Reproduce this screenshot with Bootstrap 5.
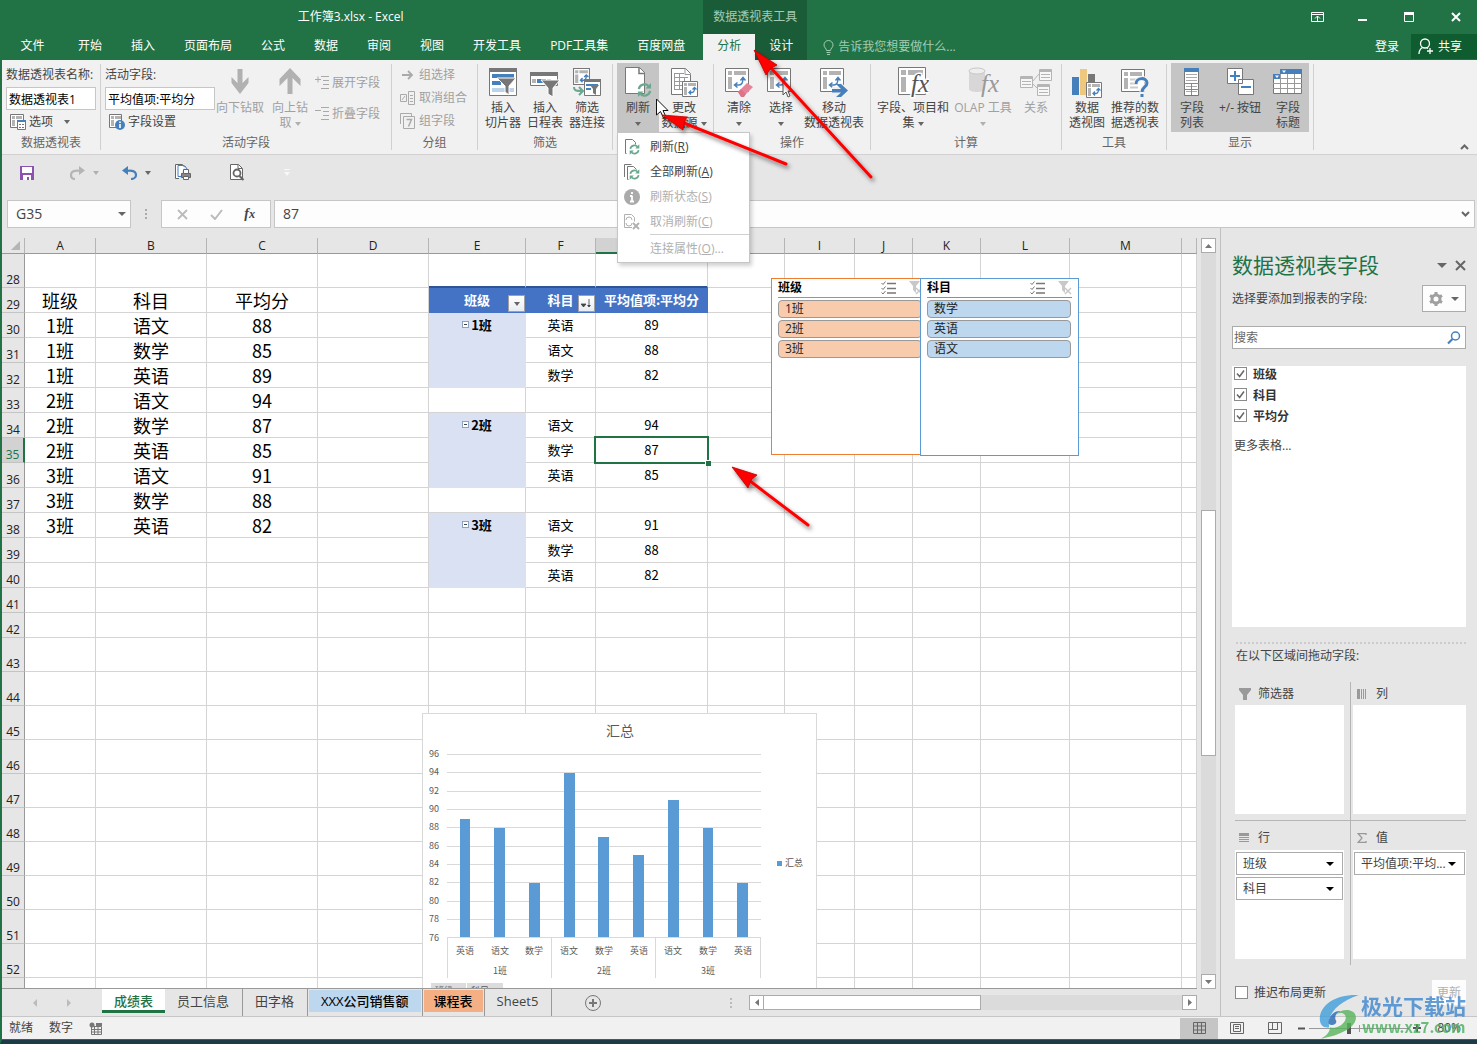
<!DOCTYPE html>
<html lang="zh-CN">
<head>
<meta charset="utf-8">
<meta name="viewport" content="width=device-width, initial-scale=1">
<title>工作簿3.xlsx - Excel</title>
<link href="https://cdn.jsdelivr.net/npm/bootstrap@5.3.0/dist/css/bootstrap.min.css" rel="stylesheet">
<style>
:root{--xl-green:#217346;--xl-dark:#1b5c38;--xl-bg:#e6e6e6;--xl-line:#d4d4d4;--xl-blue:#4680bc}
body{font-family:"Open Sans","Noto Sans CJK SC",sans-serif;font-size:12px;line-height:16px;color:#444;background:var(--xl-bg);overflow:hidden}
svg{display:block;flex:none}
button,input{font-family:inherit;font-size:12px;line-height:16px;color:inherit}
button{background:none;border:0;padding:0}
a{color:inherit;text-decoration:none}
.app-window{border-left:2px solid var(--xl-green);border-bottom:4px solid #1d3a47}
.caret-s{width:0;height:0;border:3px solid transparent;border-top:4px solid #666;border-bottom:0;display:inline-block;vertical-align:middle}
/* title bar and tabs */
.app-head{background:var(--xl-green);color:#fff}
.head-top{height:34px}
.head-tabs{height:26px}
.head-tabs .nav-link{color:#fff;padding:4px 14px 0;font-size:12px;line-height:16px;border-radius:0}
.head-tabs .file-tab{width:61px;text-align:center}
.ctx{background:var(--xl-dark);width:104px}
.ctx .nav-link.active{background:#f1f1f1;color:var(--xl-green)}
.ctx-title,.tell-me{color:#a3cbb3}
.share-btn{background:#0e5c2f;color:#fff;width:66px;height:25px}
/* ribbon */
.ribbon{background:#f1f1f1;border-bottom:1px solid #d2d0d0;height:95px;padding-top:3px}
.rgroup{padding:0 5px 0 4px;position:relative;height:88px}
.rgroup::after{content:"";position:absolute;right:0;top:1px;bottom:1px;width:1px;background:#d0d0d0}
.rgroup .gbody{height:69px}
.gname{text-align:center;color:#666;padding-top:3px;white-space:nowrap}
.rbtn{display:flex;flex-direction:column;align-items:center;height:69px;padding-top:4px;line-height:15px;white-space:nowrap;color:#444}
.rbtn svg{height:32px;margin-bottom:1px}
.w-a{width:42px}.w-b{width:50px}.w-c{width:54px}.w-d{width:64px}.w-e{width:76px}
.held{background:#c5c5c5}
.off,.rbtn.off{color:#a0a0a0}
.off .caret-s{border-top-color:#b0b0b0}
.rfield{height:23px;border:1px solid #c6c6c6;background:#fff;color:#000;padding:0 2px;width:100%;display:block}
.rrow{display:flex;align-items:center;gap:3px;height:23px;white-space:nowrap}
.menu-list{min-width:133px;width:133px;border:1px solid #c6c6c6;border-radius:0;padding:1px 0;box-shadow:2px 3px 4px rgba(0,0,0,.18);font-size:12px;top:69px;left:0;z-index:30}
.menu-list .dropdown-item{padding:0 0 0 6px;height:25px;line-height:16px;display:flex;align-items:center;gap:10px;color:#444}
.menu-list .dropdown-item.disabled{color:#b0b0b0}
.menu-list .dropdown-divider{margin:0 0 1px 32px;border-color:#d0d0d0}
/* quick access and formula bar */
.qat{height:45px;padding:0 0 10px 18px}
.fbar{height:28px;padding:0 2px 0 5px}
.fbox{border:1px solid #c6c6c6;background:#fdfdfd;height:28px;display:flex;align-items:center}
.fbox input{border:0;background:none;font-size:14px;min-width:0;color:#444}
/* sheet */
.sheet{position:relative;overflow:hidden;border-bottom:1px solid #999}
.cells{table-layout:fixed;width:100%;border-collapse:separate;border-spacing:0;font-family:"Noto Sans CJK SC",sans-serif;background:#fff;color:#000}
.cells th,.cells td{padding:0;overflow:visible;text-align:center;white-space:nowrap;border-right:1px solid var(--xl-line);border-bottom:1px solid var(--xl-line);line-height:22px;height:25px}
.cells th{font-weight:400;background:var(--xl-bg);font-size:12px;font-family:"Open Sans",sans-serif;color:#222}
.cells thead th{height:16px;line-height:14px;border-right-color:#b5b5b5;border-bottom-color:#999}
.cells tbody th{vertical-align:bottom;line-height:14px;border-right-color:#999;border-bottom-color:#c4c4c4}
.cells .tall td,.cells .tall th{height:34px}
.cells td{font-size:13px}
.cells .src{font-size:18px}
.cells .ph{background:#4472c4;border-color:#4472c4;color:#fff;font-weight:700;position:relative}
.cells .pt{border-bottom:2px solid #2f5597}
.cells .pg{background:#d9e1f2;border-color:#d9e1f2;font-weight:700}
.cells .th-on{background:#d2d2d2;color:var(--xl-green);border-bottom:2px solid var(--xl-green)}
.cells .tr-on{background:#d2d2d2;color:var(--xl-green);border-right:2px solid var(--xl-green)}
.toggle{display:inline-block;width:7px;height:7px;border:1px solid #8ea2c0;background:#fff;margin-right:2px;vertical-align:2px;position:relative}
.toggle::after{content:"";position:absolute;left:1px;right:1px;top:2px;height:1px;background:#345}
.flt{position:absolute;right:0;bottom:0;width:17px;height:17px;border:1px solid #a0a0a0;background:linear-gradient(#fff,#e8ecf2);display:flex;align-items:center;justify-content:center}
.cell-on{position:relative}
.pick{position:absolute;inset:-2px;border:2px solid var(--xl-green)}
.pick::after{content:"";position:absolute;right:-4px;bottom:-4px;width:6px;height:6px;background:var(--xl-green);border:1px solid #fff;border-right:0;border-bottom:0}
.slicer{position:absolute;width:159px;background:#fff;border:1px solid;padding:0 6px;color:#000;top:40px}
.slicer.slicer-a{left:769px;height:177px;border-color:#ed7d31}
.slicer.slicer-b{left:918px;height:178px;border-color:#5b9bd5}
.slicer-top{height:19px;border-bottom:1px solid;border-color:inherit;font-weight:700;margin-bottom:2px}
.slicer button{display:block;width:144px;height:18px;border:1px solid #999;border-radius:4px;text-align:left;padding-left:6px;margin-bottom:2px;line-height:14px;color:#222}
.slicer-a button{background:#f8cbad}.slicer-b button{background:#bdd7ee}
.chart-box{position:absolute;left:420px;top:475px;background:#fff;border:1px solid #d9d9d9;width:395px;height:290px}
.chart-box text{font-family:"Noto Sans CJK SC",sans-serif;fill:#595959;text-anchor:middle;font-size:9px}
/* scroll bars */
.vbar{width:15px;background:#dbdbdb}
.sbtn{width:15px;height:15px;background:#fff;border:1px solid #ababab;display:flex;align-items:center;justify-content:center;flex:none}
.sthumb{background:#fff;border:1px solid #ababab}
.vbar .sthumb{height:246px;margin-top:257px}
.hbar{width:448px;height:15px;background:#dbdbdb}
.hbar .sthumb{width:218px;margin-left:-1px}
/* sheet tabs */
.tabbar{height:27px}
.tabbar .nav-link{font-size:13px;line-height:18px;color:#444;border-radius:0;height:24px;padding:3px 12px;white-space:nowrap}
.tabbar .nav-item{border-right:1px solid #999;padding-right:1px}
.tabbar .nav-item:first-child{border-right:0;padding:0}
.tabbar .nav-link.active{background:#fff;color:var(--xl-green);border-bottom:3px solid var(--xl-green);font-weight:500}
.tabbar .t-blue{background:#bdd7ee;color:#000;margin:1px 0 0 1px;height:22px;line-height:16px;font-weight:500}
.tabbar .t-orange{background:#f4b084;color:#000;padding:3px 10px;margin:1px 0 0 1px;height:22px;line-height:16px;font-weight:500}
/* fields pane */
.pane{width:257px;border-left:1px solid #c0c0c0;padding:17px 11px 0;background:var(--xl-bg)}
.pane h2{font-size:21px;line-height:24px;color:var(--xl-green);margin:0;font-weight:400}
.gear-btn{width:44px;height:27px;border:1px solid #ababab;background:#fdfdfd;gap:8px}
.find{border:1px solid #ababab;background:#fff;height:23px}
.find input{border:0;background:none;padding:0 1px;min-width:0}
.find input::placeholder{color:#666}
.flist{background:#fff;height:261px;padding:1px 2px}
.fcheck{display:flex;align-items:center;gap:6px;height:21px;min-height:0;margin:0;padding:0}
.fcheck .form-check-input{width:13px;height:13px;margin:0;float:none;border:1px solid #8a8a8a;border-radius:0;background-color:#fff}
.fcheck .form-check-input:checked{background-image:url("data:image/svg+xml,%3Csvg xmlns='http://www.w3.org/2000/svg' viewBox='0 0 11 11'%3E%3Cpath d='M2 5.5l2.6 3L9 2.5' fill='none' stroke='%23666' stroke-width='1.5'/%3E%3C/svg%3E");background-color:#fff;border-color:#8a8a8a}
.flist .fcheck{align-items:flex-start}
.flist label{font-weight:700;color:#333}
.areas{display:grid;grid-template-columns:116px 1fr}
.zone{padding:0 0 6px 2px}
.zone:nth-child(odd){padding:0 6px 6px 0;border-right:1px solid #b5b5b5}
.zone:nth-child(-n+2){border-bottom:1px solid #b5b5b5}
.zhead{height:23px;gap:7px;padding-left:4px}
.zone:nth-child(n+3) .zhead{height:29px;padding-top:4px}
.zbox{height:109px;background:#fff;padding:2px 1px}
.zitem{width:100%;height:23px;border:1px solid #ababab;background:#fff;padding:0 8px 0 6px;display:flex;align-items:center;justify-content:space-between;margin-bottom:2px;white-space:nowrap}
.zitem .caret-s{border-width:4px 4px 0;border-top-color:#000}
.upd{width:34px;height:25px;background:#fdfdfd;color:#b0b0b0}
/* status bar */
.status{height:23px;background:#f1f1f1;border-top:1px solid #c6c6c6;padding-left:7px}
.vbtn{width:38px;height:21px;display:flex;align-items:center;justify-content:center}
.zoom-range{appearance:none;width:100px;height:15px;margin:0;background:linear-gradient(#999,#999) center/100% 1px no-repeat,linear-gradient(#999,#999) center/1px 7px no-repeat}
.zoom-range::-webkit-slider-thumb{appearance:none;width:4px;height:11px;background:#555}
.zoom-range::-moz-range-thumb{width:4px;height:11px;background:#555;border:0;border-radius:0}
.notes{position:absolute;left:638px;top:40px;pointer-events:none;z-index:40}
.brand{position:absolute;right:8px;bottom:0;z-index:40;pointer-events:none;width:156px;height:50px;opacity:.8}
.brand text{font-family:"Noto Sans CJK SC",sans-serif;font-weight:700}
</style>
<script src="https://cdn.jsdelivr.net/npm/bootstrap@5.3.0/dist/js/bootstrap.bundle.min.js"></script>
</head>
<body>
<svg width="0" height="0" class="position-absolute" aria-hidden="true">
  <symbol id="pv" viewBox="0 0 24 24"><path d="M.5.5h23v23H.5z" fill="#fff" stroke="#777"/><path d="M3 3h4v4H3zM9 3h12v4H9zM3 9h4v12H3z" fill="#b3b3b3"/><path d="M10 17h4c3 0 4-2 4-7M15.500 12.500 18 9.500l2.500 3M12.500 14.500 9.500 17l3 2.500" fill="none" stroke="#4680bc" stroke-width="1.500"/></symbol>
  <symbol id="pvs" viewBox="0 0 16 16"><path d="M.5.5h15v15H.5z" fill="#fff" stroke="#777"/><path d="M2 2h3v3H2zM6 2h8v3H6zM2 6h3v8H2z" fill="#b3b3b3"/><path d="M7 11.500h3c2 0 2.500-2 2.500-4.500M10.500 8.500l2-2 2 2M9 9.500l-2 2 2 2" fill="none" stroke="#4680bc" stroke-width="1.300"/></symbol>
  <symbol id="cyc" viewBox="0 0 16 16"><path d="M2 7a6 5.500 0 0 1 10.500-3M14 9a6 5.500 0 0 1-10.500 3" fill="none" stroke="#6aa88f" stroke-width="2.400"/><path d="M15 .5v6H9zM1 15.500v-6h6z" fill="#6aa88f"/></symbol>
  <symbol id="chk" viewBox="0 0 16 14"><path d="M6 2.500h9M6 7.500h9M6 12h9" stroke="#777" stroke-width="1.300"/><path d="M.5 2 2 3.500 4.500.5M.5 7 2 8.500 4.500 5.500M.5 11.500 2 13l2.500-3" fill="none" stroke="#777"/></symbol>
  <symbol id="nofl" viewBox="0 0 14 14"><path d="M0 0h11L7 5v7L4 9V5z" fill="#c8c8c8"/><path d="m7 7 6 6m0-6-6 6" stroke="#c8c8c8" stroke-width="1.500"/></symbol>
</svg>

<div class="app-window d-flex flex-column vh-100 position-relative">
  <header class="app-head d-flex flex-shrink-0">
    <div class="pe-1">
      <div class="head-top d-flex align-items-center justify-content-center">工作簿3.xlsx - Excel</div>
      <nav class="head-tabs nav flex-nowrap text-nowrap" style="gap:1px">
        <a class="nav-link file-tab" href="#">文件</a><a class="nav-link" href="#">开始</a><a class="nav-link" href="#">插入</a><a class="nav-link" href="#">页面布局</a><a class="nav-link" href="#">公式</a><a class="nav-link" href="#">数据</a><a class="nav-link" href="#">审阅</a><a class="nav-link" href="#">视图</a><a class="nav-link" href="#">开发工具</a><a class="nav-link" href="#">PDF工具集</a><a class="nav-link" href="#">百度网盘</a>
      </nav>
    </div>
    <div class="ctx">
      <div class="head-top ctx-title d-flex align-items-center justify-content-center">数据透视表工具</div>
      <nav class="head-tabs nav nav-fill flex-nowrap"><a class="nav-link active" href="#">分析</a><a class="nav-link" href="#">设计</a></nav>
    </div>
    <div class="flex-grow-1">
      <div class="head-top d-flex align-items-center justify-content-end pe-3" style="gap:33px">
        <button aria-label="功能区显示选项"><svg width="13" height="10" fill="none" stroke="#fff"><path d="M.5.5h12v9H.5zM0 2.500h13M6.500 9V4M4 6.500 6.500 4 9 6.500"/></svg></button>
        <button aria-label="最小化"><svg width="10" height="10"><path d="M1 7h9v2H1z" fill="#fff"/></svg></button>
        <button class="ms-1" aria-label="最大化"><svg width="10" height="10"><path d="M.5.500h9v9h-9z" fill="none" stroke="#fff"/><path d="M0 0h10v3H0z" fill="#fff"/></svg></button>
        <button class="ms-1" aria-label="关闭"><svg width="10" height="10"><path d="m1 1 8 8m0-8L1 9" stroke="#fff" stroke-width="2"/></svg></button>
      </div>
      <div class="head-tabs d-flex">
        <div class="tell-me d-flex align-items-center gap-1 ps-3"><svg width="11" height="15" fill="none" stroke="#a3cbb3"><path d="M3.500 10.500c0-2-2.500-3-2.500-5.500a4.500 4.500 0 0 1 9 0c0 2.500-2.500 3.500-2.500 5.500zM3.500 12.500h4M4 14.500h3"/></svg>告诉我您想要做什么...</div>
        <button class="ms-auto me-2 px-1 text-white">登录</button>
        <button class="share-btn d-flex align-items-center justify-content-center gap-1 pe-2"><svg width="16" height="17" fill="none" stroke="#fff" stroke-width="1.300"><circle cx="7" cy="5.500" r="4.500"/><path d="M1 16c0-3 1-5 3.500-6.500M9 10l1 .5M12 10v6M9 13h6"/></svg>共享</button>
      </div>
    </div>
  </header>

  <section class="ribbon d-flex flex-shrink-0">
    <div class="rgroup" style="width:99px">
      <div class="gbody">
        <label for="pvname" class="d-block text-nowrap pt-1 pb-1">数据透视表名称:</label>
        <input id="pvname" class="rfield" value="数据透视表1">
        <button class="rrow ps-1"><svg width="16" height="16"><path d="M.5.500h13v13H.5z" fill="#fff" stroke="#777"/><path d="M2 2h3v3H2zM6 2h6v3H6zM2 6h3v6H2z" fill="#b3b3b3"/><path d="M7.500 6.500h8v9h-8z" fill="#fff" stroke="#777"/><path d="M7 6h9v2H7z" fill="#4680bc"/><path d="M9 10.500h2m1 0h2m-5 3h2m1 0h2" stroke="#777"/></svg>选项<span class="caret-s ms-2"></span></button>
      </div>
      <div class="gname">数据透视表</div>
    </div>
    <div class="rgroup" style="width:291px">
      <div class="gbody d-flex">
        <div style="width:110px">
          <label for="actf" class="d-block pt-1 pb-1">活动字段:</label>
          <input id="actf" class="rfield" value="平均值项:平均分">
          <button class="rrow ps-1"><svg width="16" height="16"><path d="M.5.500h12v13H.5z" fill="#fff" stroke="#777"/><path d="M2 2h3v3H2zM6 2h6v3H6zM2 6h3v6H2z" fill="#b3b3b3"/><circle cx="11" cy="11" r="5" fill="#4680bc"/><path d="M11 7.500v1.500M11 10v4" stroke="#fff" stroke-width="1.600"/></svg>字段设置</button>
        </div>
        <button class="rbtn off w-b"><svg width="24" height="32"><path d="M9.500 2h5v14l6-6v6L12 27 3.500 16v-6l6 6z" fill="#b1b1b1"/></svg>向下钻取</button>
        <button class="rbtn off w-b"><svg width="24" height="32"><path d="M9.500 27h5V11l8 8v-7L12 1 1.500 12v7l8-8z" fill="#b1b1b1"/></svg>向上钻<span>取 <span class="caret-s"></span></span></button>
        <div class="off">
          <button class="rrow mt-2"><svg width="14" height="14" stroke="#a9a9a9"><path d="M0 3.500h6M3 .5v6M6 .5h8M8 4.500h6M8 8.500h6M6 12.500h8"/></svg>展开字段</button>
          <button class="rrow mt-2"><svg width="14" height="14" stroke="#a9a9a9"><path d="M0 3.500h6M6 .5h8M8 4.500h6M8 8.500h6M6 12.500h8"/></svg>折叠字段</button>
        </div>
      </div>
      <div class="gname">活动字段</div>
    </div>
    <div class="rgroup" style="width:86px">
      <div class="gbody off ps-1">
        <button class="rrow"><svg width="16" height="14" fill="none" stroke="#aaa" stroke-width="1.800"><path d="M2 7h10M8 3l4 4-4 4"/></svg>组选择</button>
        <button class="rrow"><svg width="16" height="14" fill="none" stroke="#aaa"><path d="M.5 3.500h6v7h-6zM2 9l3-4M8.500.500h6v13h-6zM10 4.500h3m-3 3h3m-3 3h3"/></svg>取消组合</button>
        <button class="rrow"><svg width="16" height="16" fill="none" stroke="#aaa"><path d="M.5 11V.500h11v3M3.500 3.500h11v12h-11z"/><path d="M6.500 6.500h5l-3 7" stroke-width="1.500"/></svg>组字段</button>
      </div>
      <div class="gname">分组</div>
    </div>
    <div class="rgroup">
      <div class="gbody d-flex">
        <button class="rbtn w-a"><svg width="28" height="32"><path d="M.5 1.500h27v27H.5z" fill="#fff" stroke="#777"/><path d="M0 1h28v4H0z" fill="#777"/><path d="M3 7h22v4H3zM3 14h9v4H3z" fill="#4680bc"/><path d="M3 21h22v4H3z" fill="#bdd3ea"/><path d="M8 11h19l-7 8v9l-4-3v-6z" fill="#777" stroke="#fff"/></svg>插入<span>切片器</span></button>
        <button class="rbtn w-a"><svg width="30" height="32"><path d="M.5 5.500h27v13H.5z" fill="#fff" stroke="#777"/><path d="M0 5h28v4H0z" fill="#777"/><path d="M2 12h4v4H2zM17 12h4v4h-4z" fill="#b3b3b3"/><path d="M7 12h9v4H7z" fill="#4680bc"/><path d="M11 13h19l-7 8v9l-5-3v-6z" fill="#777" stroke="#fff"/></svg>插入<span>日程表</span></button>
        <button class="rbtn w-a"><svg width="28" height="32"><use href="#pvs" x="0" y="1" width="17" height="17"/><path d="M11.500 12.500h16v16h-16z" fill="#fff" stroke="#777"/><path d="M11 12h17v3H11z" fill="#777"/><path d="M13 17h12v2H13zM13 21h5v2h-5z" fill="#4680bc"/><path d="M17 18h9l-3 4v6l-3-2v-4z" fill="#777"/><path d="M1 20c0 4 3 4 8 4M6 20l4 4-4 4" fill="none" stroke="#6aa88f" stroke-width="2"/></svg>筛选<span>器连接</span></button>
      </div>
      <div class="gname">筛选</div>
    </div>
    <div class="rgroup">
      <div class="gbody d-flex">
        <div class="dropdown">
          <button class="rbtn held w-a" aria-expanded="true"><svg width="28" height="32"><path d="M1.500.500h14l5 5v21h-19z" fill="#fff" stroke="#777"/><path d="M15 .5v6h6" fill="none" stroke="#777" stroke-width="1.500"/><use href="#cyc" x="13" y="15" width="15" height="16"/></svg>刷新<span><span class="caret-s"></span></span></button>
          <div class="dropdown-menu menu-list show">
            <a class="dropdown-item" href="#"><svg width="16" height="16"><path d="M2.500 14.500h-1V.5h7l3 3v2" fill="#fff" stroke="#777"/><use href="#cyc" x="5" y="5" width="11" height="11"/></svg><span>刷新(<u>R</u>)</span></a>
            <a class="dropdown-item" href="#"><svg width="16" height="16"><path d="M.5 13V.5h7M4.500 15.500h-1v-13h6l3 3" fill="none" stroke="#777"/><use href="#cyc" x="5" y="5" width="11" height="11"/></svg><span>全部刷新(<u>A</u>)</span></a>
            <a class="dropdown-item disabled" href="#"><svg width="16" height="16"><circle cx="8" cy="8" r="8" fill="#aaa"/><path d="M8 3v2M8 6.500V13M6 7h2M6 12.500h4" stroke="#fff" stroke-width="1.800"/></svg><span>刷新状态(<u>S</u>)</span></a>
            <a class="dropdown-item disabled" href="#"><svg width="16" height="16" fill="none" stroke="#b0b0b0"><path d="M8 13.500H.5V.5h7l3 3v4M2 6a3 3 0 0 1 6 0M2 9a3 3 0 0 0 6 0"/><path d="m9 9 6 6m0-6-6 6" stroke-width="1.800"/></svg><span>取消刷新(<u>C</u>)</span></a>
            <hr class="dropdown-divider">
            <a class="dropdown-item disabled" href="#"><svg width="16" height="16"></svg><span>连接属性(<u>O</u>)...</span></a>
          </div>
        </div>
        <button class="rbtn w-b"><svg width="28" height="32"><path d="M1.500 1.500h14l5 5v21h-19z" fill="#fff" stroke="#777"/><path d="M15 1.500v6h6M4 6.500h10M4 10.500h14M4 14.500h14M4 18.500h14M4 22.500h14M4.500 6v17M9.500 6v17M14.500 10v13" fill="none" stroke="#999"/><use href="#pvs" x="12" y="14" width="16" height="16"/></svg>更改<span>数据源 <span class="caret-s"></span></span></button>
      </div>
      <div class="gname">数据</div>
    </div>
    <div class="rgroup">
      <div class="gbody d-flex">
        <button class="rbtn w-a"><svg width="28" height="32"><use href="#pv" y="1" width="24" height="24"/><path d="m13 25 9-9 6 4-9 9h-3z" fill="#e6849a"/><path d="m13 25 3-3 5 5-2 3h-3z" fill="#dd7389"/></svg>清除<span><span class="caret-s"></span></span></button>
        <button class="rbtn w-a"><svg width="28" height="32"><use href="#pv" y="1" width="24" height="24"/><path d="M16 15v13l3-3 2 5 2-1-2-5h4z" fill="#fff" stroke="#555"/></svg>选择<span><span class="caret-s"></span></span></button>
        <button class="rbtn w-d"><svg width="28" height="32"><use href="#pv" y="1" width="24" height="24"/><path d="M12 22.500h8M19 17l7 6.500-7 6.500" fill="none" stroke="#f1f1f1" stroke-width="5"/><path d="M12 22h9l-5-5h5l7 6.500-7 6.500h-5l5-4.500h-9z" fill="#4680bc"/></svg>移动<span>数据透视表</span></button>
      </div>
      <div class="gname">操作</div>
    </div>
    <div class="rgroup">
      <div class="gbody d-flex">
        <button class="rbtn w-e"><svg width="32" height="32"><path d="M1.500.500h27v27h-27z" fill="#fff" stroke="#777"/><path d="M4 3h5v5H4zM11 3h15v5H11zM4 10h5v15H4z" fill="#b3b3b3"/><text x="14" y="25" font-family="Liberation Serif,serif" font-style="italic" font-size="25" fill="#555" stroke="#fff" stroke-width="3" paint-order="stroke">fx</text></svg>字段、项目和<span>集 <span class="caret-s"></span></span></button>
        <button class="rbtn off w-d"><svg width="32" height="32"><path d="M2 4v18c0 4 16 4 16 0V4z" fill="#d9d6d8"/><ellipse cx="10" cy="4" rx="8" ry="3" fill="#eee" stroke="#c8c8c8"/><text x="14" y="25" font-family="Liberation Serif,serif" font-style="italic" font-size="25" fill="#999">fx</text></svg>OLAP 工具<span><span class="caret-s"></span></span></button>
        <button class="rbtn off w-a"><svg width="32" height="32" fill="#f7f7f7" stroke="#b5b5b5"><path d="m12 15 7-8m-7 9 6 6"/><path d="M.5 9.500h12v11H.5zM19.500 2.500h12v11h-12zM17.500 17.500h12v11h-12zM2 14.500h9m-9 3h9M21 7.500h9m-9 3h9M19 22.500h9m-9 3h9"/><path d="M0 10h13v2H0zM19 3h13v2H19zM17 18h13v2H17z" fill="#b5b5b5" stroke="none"/></svg>关系</button>
      </div>
      <div class="gname">计算</div>
    </div>
    <div class="rgroup">
      <div class="gbody d-flex">
        <button class="rbtn w-a"><svg width="32" height="32"><path d="M1 10h7v18H1z" fill="#4680bc"/><path d="M9 2h7v26H9z" fill="#edc87e"/><path d="M17 7h7v10h-7z" fill="#777"/><use href="#pvs" x="15" y="15" width="16" height="16"/></svg>数据<span>透视图</span></button>
        <button class="rbtn w-c"><svg width="30" height="32"><path d="M1.500 2.500h23v22h-23z" fill="#fff" stroke="#777"/><path d="M4 5h4v4H4zM10 5h12v4H10zM4 11h4v11H4z" fill="#b3b3b3"/><path d="M10 12.500h8m-8 4h8m-8 4h8" stroke="#ccc" stroke-width="2"/><path d="M16 17c0-7 11-7 11-1 0 4-5 4-5 9M22 27v3" fill="none" stroke="#f1f1f1" stroke-width="5"/><path d="M16 17c0-7 11-7 11-1 0 4-5 4-5 9M22 27v3" fill="none" stroke="#4680bc" stroke-width="3"/></svg>推荐的数<span>据透视表</span></button>
      </div>
      <div class="gname">工具</div>
    </div>
    <div class="rgroup">
      <div class="gbody d-flex held">
        <button class="rbtn w-a"><svg width="16" height="32"><path d="M.5 1.500h14v27H.5z" fill="#fff" stroke="#777"/><path d="M0 1h15v4H0z" fill="#4680bc"/><path d="M2 7.500h11m-11 3h11m-11 3h11M2 19.500h5m1 0h5m-11 5h5m1 0h5" stroke="#aaa"/><path d="M0 16.500h15M7.500 16v12M0 22.500h15" stroke="#888"/></svg>字段<span>列表</span></button>
        <button class="rbtn w-c"><svg width="28" height="32"><path d="M1.500 1.500h15v15h-15zM12.500 12.500h15v15h-15z" fill="#fff" stroke="#777"/><path d="M4 9h10M9 4v10M15 20h10" stroke="#4680bc" stroke-width="2"/></svg>+/- 按钮</button>
        <button class="rbtn w-a"><svg width="30" height="32"><path d="M.5 7.500h7v-5h21v24H.5z" fill="#fff" stroke="#777"/><path d="M7 2h22v5H7zM0 7h8v5H0z" fill="#4680bc"/><path d="M8 11.500h21M0 16.500h29M0 21.500h29M7.500 7v19M14.500 7v19M21.500 7v19" stroke="#999"/><path d="M9 3.500h4l-2 2.500zM2 8.500h4L4 11z" fill="#fff"/></svg>字段<span>标题</span></button>
      </div>
      <div class="gname">显示</div>
    </div>
    <button class="ms-auto align-self-end mb-1 me-2" aria-label="折叠功能区"><svg width="9" height="6"><path d="m1 5 3.500-3.500L8 5" fill="none" stroke="#666" stroke-width="2"/></svg></button>
  </section>

  <div class="qat d-flex align-items-center flex-shrink-0">
    <button aria-label="保存"><svg width="14" height="14"><path d="M0 0h14v14H0z" fill="#8c52b0"/><path d="M2 1h10v6H2zM3 9h8v5h-2v-3H7v3H3z" fill="#fff"/></svg></button>
    <button class="d-flex align-items-center off" style="margin-left:36px" aria-label="恢复"><svg width="15" height="14"><path d="M11 5C5 4 1 5 1 9c0 2 1 4 4 4" fill="none" stroke="#b5b5b5" stroke-width="2.200"/><path d="M9 0v9l6-4.500z" fill="#b5b5b5"/></svg><span class="caret-s ms-2"></span></button>
    <button class="d-flex align-items-center" style="margin-left:23px" aria-label="撤消"><svg width="15" height="14"><path d="M4 5c6-1 10 0 10 4 0 2-2 4-5 4" fill="none" stroke="#4680bc" stroke-width="2.200"/><path d="M6 0v9L0 4.500z" fill="#4680bc"/></svg><span class="caret-s ms-2"></span></button>
    <button class="ms-4" aria-label="打印"><svg width="17" height="17" fill="#fff" stroke="#666"><path d="M4 14.500H.5V.5h7l2 2" /><path d="M9 1.500H3v11h3M8 2h2l2 3" fill="none" stroke="#4680bc"/><path d="M6.500 9.500h9v4h-9z" fill="#888"/><path d="M8.500 5.500h5v4h-5zM8.500 12.500h5v3h-5z"/></svg></button>
    <button style="margin-left:38px" aria-label="打印预览"><svg width="15" height="17" fill="#fff" stroke="#666"><path d="M.5.500h8l4 4v11H.5z"/><path d="M8 .5v4h4" fill="none"/><circle cx="7" cy="9" r="3.500" stroke-width="1.800"/><path d="m9.500 12 4 4" stroke-width="2.200"/></svg></button>
    <button style="margin-left:39px" aria-label="自定义快速访问工具栏"><svg width="6" height="8" fill="#f8f8f8"><path d="M0 0h6v1H0zM0 3h6L3 7z"/></svg></button>
  </div>

  <div class="fbar d-flex flex-shrink-0">
    <div class="fbox" style="width:124px;margin-right:13px"><input class="flex-grow-1 ps-1 ms-1 w-50" aria-label="名称框" value="G35"><span class="caret-s me-1" style="border-width:4px 4px 0"></span></div>
    <svg width="4" height="28" style="margin-right:13px"><path d="M1 9h2v2H1zM1 13h2v2H1zM1 17h2v2H1z" fill="#aaa"/></svg>
    <div class="fbox justify-content-around px-1" style="width:110px;margin-right:3px">
      <button aria-label="取消"><svg width="11" height="11"><path d="m1 1 9 9m0-9-9 9" stroke="#bbb" stroke-width="1.800"/></svg></button>
      <button aria-label="输入"><svg width="13" height="11"><path d="m1 6 4 4 7-9" fill="none" stroke="#bbb" stroke-width="2"/></svg></button>
      <button aria-label="插入函数" style="font:italic bold 14px 'Liberation Serif',serif">f<small>x</small></button>
    </div>
    <div class="fbox flex-grow-1"><input class="flex-grow-1 ps-1 ms-1" aria-label="编辑栏" value="87"><svg width="9" height="6" class="me-1"><path d="m1 1 3.500 3.500L8 1" fill="none" stroke="#666" stroke-width="2"/></svg></div>
  </div>

  <main class="d-flex flex-grow-1" style="min-height:0">
    <div class="flex-grow-1 d-flex flex-column" style="min-width:0;padding-top:10px">
      <div class="d-flex flex-grow-1" style="min-height:0">
        <div class="sheet flex-grow-1">
          <table class="cells">
            <colgroup><col style="width:23px"><col style="width:71px"><col style="width:111px"><col style="width:111px"><col style="width:111px"><col style="width:97px"><col style="width:70px"><col style="width:112px"><col style="width:77px"><col style="width:70px"><col style="width:58px"><col style="width:68px"><col style="width:89px"><col style="width:112px"><col></colgroup>
            <thead><tr><th><svg width="9" height="9" class="ms-auto me-1"><path d="M9 0v9H0z" fill="#b5b5b5"/></svg></th><th>A</th><th>B</th><th>C</th><th>D</th><th>E</th><th>F</th><th class="th-on">G</th><th>H</th><th>I</th><th>J</th><th>K</th><th>L</th><th>M</th><th></th></tr></thead>
            <tbody>
              <tr class="tall"><th>28</th><td></td><td></td><td></td><td></td><td class="pt"></td><td class="pt"></td><td class="pt"></td><td></td><td></td><td></td><td></td><td></td><td></td><td></td></tr>
              <tr><th>29</th><td class="src">班级</td><td class="src">科目</td><td class="src">平均分</td><td></td><td class="ph">班级<button class="flt" aria-label="筛选班级"><span class="caret-s"></span></button></td><td class="ph">科目<button class="flt" aria-label="筛选科目"><svg width="11" height="9"><path d="M0 5h5L2.500 8zM8 0v8M6.500 6 8 8l1.500-2" fill="#444" stroke="#444" stroke-width=".8"/></svg></button></td><td class="ph">平均值项:平均分</td><td></td><td></td><td></td><td></td><td></td><td></td><td></td></tr>
              <tr><th>30</th><td class="src">1班</td><td class="src">语文</td><td class="src">88</td><td></td><td class="pg"><span class="toggle"></span>1班</td><td>英语</td><td>89</td><td></td><td></td><td></td><td></td><td></td><td></td><td></td></tr>
              <tr><th>31</th><td class="src">1班</td><td class="src">数学</td><td class="src">85</td><td></td><td class="pg"></td><td>语文</td><td>88</td><td></td><td></td><td></td><td></td><td></td><td></td><td></td></tr>
              <tr><th>32</th><td class="src">1班</td><td class="src">英语</td><td class="src">89</td><td></td><td class="pg"></td><td>数学</td><td>82</td><td></td><td></td><td></td><td></td><td></td><td></td><td></td></tr>
              <tr><th>33</th><td class="src">2班</td><td class="src">语文</td><td class="src">94</td><td></td><td></td><td></td><td></td><td></td><td></td><td></td><td></td><td></td><td></td><td></td></tr>
              <tr><th>34</th><td class="src">2班</td><td class="src">数学</td><td class="src">87</td><td></td><td class="pg"><span class="toggle"></span>2班</td><td>语文</td><td>94</td><td></td><td></td><td></td><td></td><td></td><td></td><td></td></tr>
              <tr><th class="tr-on">35</th><td class="src">2班</td><td class="src">英语</td><td class="src">85</td><td></td><td class="pg"></td><td>数学</td><td class="cell-on">87<span class="pick"></span></td><td></td><td></td><td></td><td></td><td></td><td></td><td></td></tr>
              <tr><th>36</th><td class="src">3班</td><td class="src">语文</td><td class="src">91</td><td></td><td class="pg"></td><td>英语</td><td>85</td><td></td><td></td><td></td><td></td><td></td><td></td><td></td></tr>
              <tr><th>37</th><td class="src">3班</td><td class="src">数学</td><td class="src">88</td><td></td><td></td><td></td><td></td><td></td><td></td><td></td><td></td><td></td><td></td><td></td></tr>
              <tr><th>38</th><td class="src">3班</td><td class="src">英语</td><td class="src">82</td><td></td><td class="pg"><span class="toggle"></span>3班</td><td>语文</td><td>91</td><td></td><td></td><td></td><td></td><td></td><td></td><td></td></tr>
              <tr><th>39</th><td></td><td></td><td></td><td></td><td class="pg"></td><td>数学</td><td>88</td><td></td><td></td><td></td><td></td><td></td><td></td><td></td></tr>
              <tr><th>40</th><td></td><td></td><td></td><td></td><td class="pg"></td><td>英语</td><td>82</td><td></td><td></td><td></td><td></td><td></td><td></td><td></td></tr>
              <tr><th>41</th><td></td><td></td><td></td><td></td><td></td><td></td><td></td><td></td><td></td><td></td><td></td><td></td><td></td><td></td></tr>
              <tr><th>42</th><td></td><td></td><td></td><td></td><td></td><td></td><td></td><td></td><td></td><td></td><td></td><td></td><td></td><td></td></tr>
              <tr class="tall"><th>43</th><td></td><td></td><td></td><td></td><td></td><td></td><td></td><td></td><td></td><td></td><td></td><td></td><td></td><td></td></tr>
              <tr class="tall"><th>44</th><td></td><td></td><td></td><td></td><td></td><td></td><td></td><td></td><td></td><td></td><td></td><td></td><td></td><td></td></tr>
              <tr class="tall"><th>45</th><td></td><td></td><td></td><td></td><td></td><td></td><td></td><td></td><td></td><td></td><td></td><td></td><td></td><td></td></tr>
              <tr class="tall"><th>46</th><td></td><td></td><td></td><td></td><td></td><td></td><td></td><td></td><td></td><td></td><td></td><td></td><td></td><td></td></tr>
              <tr class="tall"><th>47</th><td></td><td></td><td></td><td></td><td></td><td></td><td></td><td></td><td></td><td></td><td></td><td></td><td></td><td></td></tr>
              <tr class="tall"><th>48</th><td></td><td></td><td></td><td></td><td></td><td></td><td></td><td></td><td></td><td></td><td></td><td></td><td></td><td></td></tr>
              <tr class="tall"><th>49</th><td></td><td></td><td></td><td></td><td></td><td></td><td></td><td></td><td></td><td></td><td></td><td></td><td></td><td></td></tr>
              <tr class="tall"><th>50</th><td></td><td></td><td></td><td></td><td></td><td></td><td></td><td></td><td></td><td></td><td></td><td></td><td></td><td></td></tr>
              <tr class="tall"><th>51</th><td></td><td></td><td></td><td></td><td></td><td></td><td></td><td></td><td></td><td></td><td></td><td></td><td></td><td></td></tr>
              <tr class="tall"><th>52</th><td></td><td></td><td></td><td></td><td></td><td></td><td></td><td></td><td></td><td></td><td></td><td></td><td></td><td></td></tr>
              <tr class="tall"><th></th><td></td><td></td><td></td><td></td><td></td><td></td><td></td><td></td><td></td><td></td><td></td><td></td><td></td><td></td></tr>
            </tbody>
          </table>
          <div class="slicer slicer-a"><div class="slicer-top d-flex align-items-center">班级<svg width="16" height="14" class="ms-auto me-2"><use href="#chk"/></svg><svg width="14" height="14" class="ms-1"><use href="#nofl"/></svg></div><button>1班</button><button>2班</button><button>3班</button></div>
          <div class="slicer slicer-b"><div class="slicer-top d-flex align-items-center">科目<svg width="16" height="14" class="ms-auto me-2"><use href="#chk"/></svg><svg width="14" height="14" class="ms-1"><use href="#nofl"/></svg></div><button>数学</button><button>英语</button><button>语文</button></div>
          <div class="chart-box">
            <svg width="393" height="288" shape-rendering="crispEdges" role="img" aria-label="汇总">
              <path d="M24 40.500h314M24 58.500h314M24 77.500h314M24 95.500h314M24 113.500h314M24 132.500h314M24 150.500h314M24 168.500h314M24 187.500h314M24 205.500h314M24 223.500h314M24.500 223v41M128.500 223v41M232.500 223v41M337.500 223v41" stroke="#d9d9d9"/>
              <g fill="#5b9bd5"><path d="M37 105h10v118H37zM71 114h11v109H71zM106 169h11v54h-11zM141 59h11v164h-11zM175 123h11v100h-11zM210 141h11v82h-11zM245 86h11v137h-11zM280 114h10v109h-10zM314 169h11v54h-11zM354 147h5v5h-5z"/></g>
              <text x="197" y="22" style="font-size:14px">汇总</text>
              <text x="11" y="43">96</text><text x="11" y="61">94</text><text x="11" y="80">92</text><text x="11" y="98">90</text><text x="11" y="116">88</text><text x="11" y="135">86</text><text x="11" y="153">84</text><text x="11" y="171">82</text><text x="11" y="190">80</text><text x="11" y="208">78</text><text x="11" y="227">76</text>
              <text x="42" y="240">英语</text><text x="77" y="240">语文</text><text x="111" y="240">数学</text><text x="146" y="240">语文</text><text x="181" y="240">数学</text><text x="216" y="240">英语</text><text x="250" y="240">语文</text><text x="285" y="240">数学</text><text x="320" y="240">英语</text>
              <text x="77" y="260">1班</text><text x="181" y="260">2班</text><text x="285" y="260">3班</text>
              <text x="371" y="152">汇总</text>
              <path d="M8 269h35v19H8zM44 269h36v19H44z" fill="#dcdcdc"/>
              <text x="21" y="280">班级</text><text x="57" y="280">科目</text><path d="M32 274h7l-3.500 4zM69 274h7l-3.500 4z" fill="#444"/>
            </svg>
          </div>
        </div>
        <div class="vbar d-flex flex-column ms-1 me-1"><button class="sbtn" aria-label="向上滚动"><svg width="7" height="4"><path d="M0 4h7L3.500 0z" fill="#777"/></svg></button><div class="sthumb"></div><button class="sbtn mt-auto" aria-label="向下滚动"><svg width="7" height="4"><path d="M0 0h7L3.500 4z" fill="#777"/></svg></button></div>
      </div>
      <div class="tabbar d-flex flex-shrink-0">
        <div class="d-flex align-items-center justify-content-around px-3" style="width:100px"><svg width="4" height="8"><path d="M4 0v8L0 4z" fill="#bbb"/></svg><svg width="4" height="8"><path d="M0 0v8l4-4z" fill="#bbb"/></svg></div>
        <ul class="nav flex-nowrap">
          <li class="nav-item"><a class="nav-link active" href="#">成绩表</a></li>
          <li class="nav-item"><a class="nav-link" href="#">员工信息</a></li>
          <li class="nav-item"><a class="nav-link" href="#">田字格</a></li>
          <li class="nav-item"><a class="nav-link t-blue" href="#">XXX公司销售额</a></li>
          <li class="nav-item"><a class="nav-link t-orange" href="#">课程表</a></li>
          <li class="nav-item"><a class="nav-link" href="#">Sheet5</a></li>
        </ul>
        <button style="margin-left:33px" aria-label="新工作表"><svg width="16" height="16" fill="none" stroke="#777"><circle cx="8" cy="8" r="7.500"/><path d="M8 4v8M4 8h8" stroke-width="2"/></svg></button>
        <div class="ms-auto d-flex align-items-center" style="margin-right:23px"><svg width="4" height="14" class="me-3"><path d="M1 2h2v2H1zM1 6h2v2H1zM1 10h2v2H1z" fill="#bbb"/></svg>
          <div class="hbar d-flex"><button class="sbtn" aria-label="向左滚动"><svg width="4" height="7"><path d="M4 0v7L0 3.500z" fill="#777"/></svg></button><div class="sthumb"></div><button class="sbtn ms-auto" aria-label="向右滚动"><svg width="4" height="7"><path d="M0 0v7l4-3.500z" fill="#777"/></svg></button></div></div>
      </div>
    </div>

    <aside class="pane flex-shrink-0 d-flex flex-column">
      <div>
        <div class="d-flex mt-2 align-items-center"><h2>数据透视表字段</h2><button class="ms-auto me-2" aria-label="任务窗格选项"><span class="caret-s" style="border-width:5px 5px 0"></span></button><button aria-label="关闭窗格"><svg width="11" height="11"><path d="m1 1 9 9m0-9-9 9" stroke="#666" stroke-width="2"/></svg></button></div>
        <div class="d-flex align-items-center justify-content-between mt-2"><span>选择要添加到报表的字段:</span><button class="gear-btn d-flex align-items-center justify-content-center" aria-label="工具"><svg width="14" height="14"><circle cx="7" cy="7" r="4" fill="none" stroke="#a0a0a0" stroke-width="3"/><path d="M7 0v3M7 11v3M1 3.500 3.500 5M10.500 9l2.500 1.500M1 10.500 3.500 9M10.500 5 13 3.500" stroke="#a0a0a0" stroke-width="3"/></svg><span class="caret-s" style="border-width:4px 4px 0"></span></button></div>
        <div class="find d-flex align-items-center" style="margin-top:14px"><input class="flex-grow-1" placeholder="搜索" aria-label="搜索"><svg width="14" height="14" class="me-1" fill="none" stroke="#4680bc"><circle cx="8.500" cy="5" r="4" stroke-width="1.500"/><path d="M5.500 8 1 12.500" stroke-width="2.200"/></svg></div>
        <div class="flist" style="margin-top:17px">
          <div class="form-check fcheck"><input class="form-check-input" type="checkbox" id="f1" checked><label for="f1">班级</label></div>
          <div class="form-check fcheck"><input class="form-check-input" type="checkbox" id="f2" checked><label for="f2">科目</label></div>
          <div class="form-check fcheck"><input class="form-check-input" type="checkbox" id="f3" checked><label for="f3">平均分</label></div>
          <a href="#" class="d-block mt-2">更多表格...</a>
        </div>
        <div class="ms-1" style="margin-top:15px;border-top:2px dotted #ccc"></div>
        <div class="ms-1 mt-1">在以下区域间拖动字段:</div>
        <div class="areas mt-3" style="margin-left:3px;padding-top:2px">
          <div class="zone"><div class="zhead d-flex align-items-center"><svg width="12" height="12"><path d="M0 0h12v2L8 7v5H4V7L0 2z" fill="#999"/></svg>筛选器</div><div class="zbox"></div></div>
          <div class="zone"><div class="zhead d-flex align-items-center"><svg width="12" height="10"><path d="M0 0h3v10H0zM4 0h1v10H4zM6 0h1v10H6zM8 0h1v10H8z" fill="#999"/></svg>列</div><div class="zbox"></div></div>
          <div class="zone"><div class="zhead d-flex align-items-center"><svg width="12" height="10"><path d="M0 0h10v3H0zM0 4h10v1H0zM0 6h10v1H0zM0 8h10v1H0z" fill="#999"/></svg>行</div><div class="zbox"><button class="zitem">班级<span class="caret-s"></span></button><button class="zitem">科目<span class="caret-s"></span></button></div></div>
          <div class="zone"><div class="zhead d-flex align-items-center"><svg width="12" height="10"><path d="M9 2V.500H1L5 5 1 9.500h8V8" fill="none" stroke="#999" stroke-width="1.300"/></svg>值</div><div class="zbox"><button class="zitem">平均值项:平均...<span class="caret-s"></span></button></div></div>
        </div>
        <div class="d-flex align-items-center justify-content-between" style="margin:15px 0 0 3px"><div class="form-check fcheck"><input class="form-check-input" type="checkbox" id="defer"><label for="defer">推迟布局更新</label></div><button class="upd" disabled>更新</button></div>
      </div>
    </aside>
  </main>

  <footer class="status d-flex align-items-center flex-shrink-0">
    <span>就绪</span><span class="ms-3">数字</span><svg width="13" height="13" class="ms-3"><path d="M2.500 4.500h10v8h-10zM2 7.500h10M5.500 5v8M9 5v8M2 10h10" fill="none" stroke="#777"/><circle cx="3" cy="3" r="2.500" fill="#777"/><path d="M7 1h6v3H7z" fill="#777"/></svg>
    <div class="ms-auto d-flex align-items-center">
      <button class="vbtn held" aria-label="普通"><svg width="13" height="12" fill="none" stroke="#666"><path d="M.5.500h12v11H.5zM0 4h13M0 8h13M4.500 0v12M8.500 0v12"/></svg></button>
      <button class="vbtn" aria-label="页面布局"><svg width="14" height="12" fill="none" stroke="#666"><path d="M.5.500h13v11H.5zM3.500 2.500h7v7h-7zM5 4.500h4M5 6.500h4"/></svg></button>
      <button class="vbtn" aria-label="分页预览"><svg width="14" height="12" fill="none" stroke="#666"><path d="M.5.500h13v11H.5zM4.500 0v7M9.500 0v7M0 7.500h10"/></svg></button>
      <button class="ms-1" aria-label="缩小"><svg width="7" height="7"><path d="M0 2.500h7v2H0z" fill="#555"/></svg></button>
      <input class="zoom-range mx-1" type="range" min="10" max="190" value="80" aria-label="缩放">
      <button aria-label="放大"><svg width="8" height="8"><path d="M0 3h8v2H0zM3 0h2v8H3z" fill="#555"/></svg></button>
      <span class="ms-3 me-3">80%</span>
    </div>
  </footer>
  <div class="flex-shrink-0" style="height:1px;background:var(--xl-green)"></div>

  <svg class="notes" width="250" height="500" viewBox="0 0 250 500" aria-hidden="true">
    <defs><filter id="sh" x="-20%" y="-20%" width="150%" height="150%"><feDropShadow dx="2" dy="3" stdDeviation="2" flood-opacity=".5"/></filter></defs>
    <path d="M16.500 59v16l4-3.500 3 6.500 2.500-1-3-6.500h5z" fill="#fff" stroke="#111"/>
    <g filter="url(#sh)" fill="#f00" stroke="#f00" stroke-linejoin="round">
      <path d="M131 28 231 137" stroke-width="3" stroke-linecap="round"/><path d="m114 10 23 15-6 3-5 7z" stroke="#b00" stroke-width=".8"/>
      <path d="m44 83 102 41" stroke-width="3" stroke-linecap="round"/><path d="m22 75 25 2-3 6-1 7z" stroke="#b00" stroke-width=".8"/>
      <path d="m110 441 58 44" stroke-width="3" stroke-linecap="round"/><path d="m92 427 25 8-6 5-3 8z" stroke="#b00" stroke-width=".8"/>
    </g>
  </svg>
  <svg class="brand" viewBox="0 0 156 50" aria-hidden="true">
    <g transform="translate(3 4) scale(.95)"><path d="M45 1C20 0 4 12 4 26c0 7 4 10 10 9-3-13 8-26 31-34z" fill="#3f9fdc"/><path d="M15 35c4 2 12-1 15-6 4-7-2-11-8-8 5-6 19-6 20 3 1 10-14 19-37 23 6-3 9-6 10-12z" fill="#58b45c"/><path d="M13 31c0-8 7-14 13-13-5 2-7 6-5 10 2 3-4 7-8 3z" fill="#2668b4"/></g>
    <text x="48" y="24" font-size="21" fill="#3d86cf">极光下载站</text>
    <text x="49" y="43" font-size="15" fill="#4cae5e">www.xz7.com</text>
  </svg>
</div>
</body>
</html>
